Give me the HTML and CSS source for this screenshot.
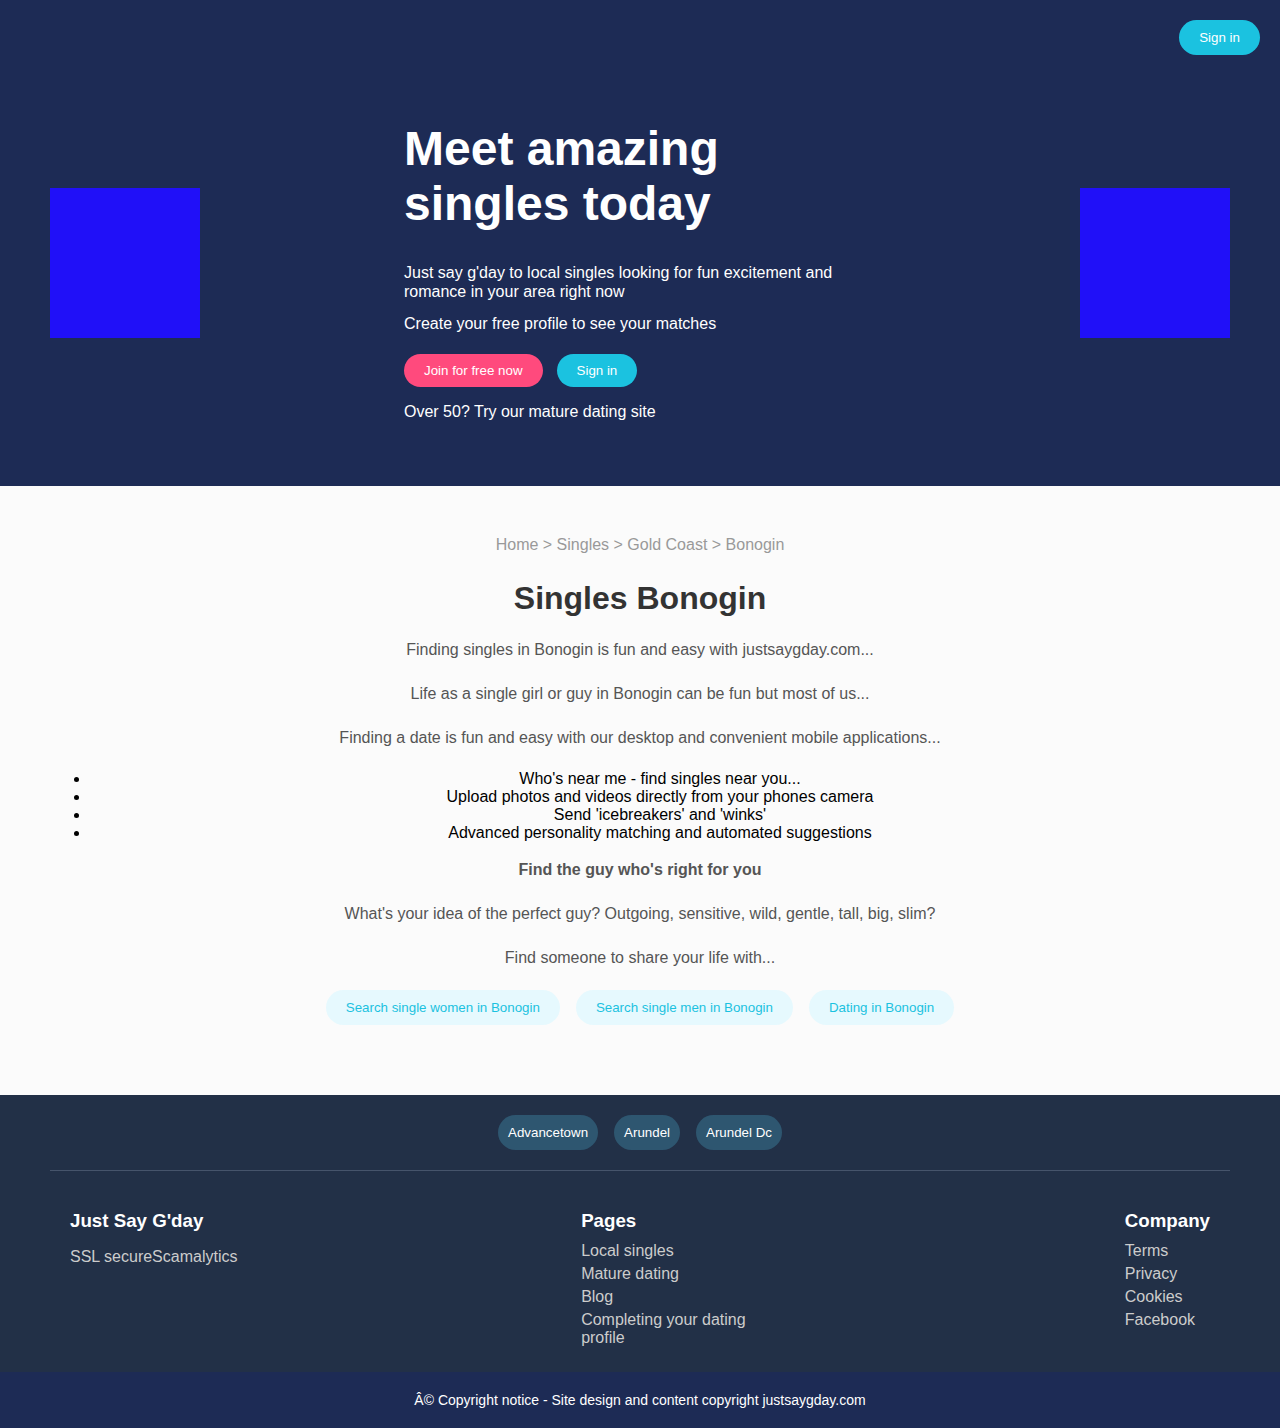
FILE: index.html
```html
<!DOCTYPE html>
<html lang="en">
<head>
<meta charset="utf-8">
<title>Singles Bonogin</title>
<link rel="stylesheet" href="styles.css">
</head>
<body>
<section class="hero">
  <div class="hero-top">
    <a class="btn btn-cyan btn-top" href="#">Sign in</a>
  </div>
  <div class="hero-body">
    <div class="square"></div>
    <div class="hero-content">
      <h1 class="hero-title">Meet amazing singles today</h1>
      <p class="hero-text">Just say g'day to local singles looking for fun excitement and romance in your area right now</p>
      <p class="hero-text">Create your free profile to see your matches</p>
      <div class="hero-actions">
        <a class="btn btn-pink" href="#">Join for free now</a>
        <a class="btn btn-cyan" href="#">Sign in</a>
      </div>
      <p class="hero-text hero-last">Over 50? Try our mature dating site</p>
    </div>
    <div class="square"></div>
  </div>
</section>

<main class="main">
  <div class="breadcrumb">Home &gt; Singles &gt; Gold Coast &gt; Bonogin</div>
  <h1 class="page-title">Singles Bonogin</h1>
  <p class="copy">Finding singles in Bonogin is fun and easy with justsaygday.com...</p>
  <p class="copy">Life as a single girl or guy in Bonogin can be fun but most of us...</p>
  <p class="copy">Finding a date is fun and easy with our desktop and convenient mobile applications...</p>
  <ul class="features">
    <li>Who's near me - find singles near you...</li>
    <li>Upload photos and videos directly from your phones camera</li>
    <li>Send 'icebreakers' and 'winks'</li>
    <li>Advanced personality matching and automated suggestions</li>
  </ul>
  <p class="copy copy-bold">Find the guy who's right for you</p>
  <p class="copy">What's your idea of the perfect guy? Outgoing, sensitive, wild, gentle, tall, big, slim?</p>
  <p class="copy">Find someone to share your life with...</p>
  <div class="search-links">
    <a class="chip" href="#">Search single women in Bonogin</a>
    <a class="chip" href="#">Search single men in Bonogin</a>
    <a class="chip" href="#">Dating in Bonogin</a>
  </div>
</main>

<footer class="footer">
  <div class="towns">
    <a class="town" href="#">Advancetown</a>
    <a class="town" href="#">Arundel</a>
    <a class="town" href="#">Arundel Dc</a>
  </div>
  <div class="footer-cols">
    <div class="fcol">
      <h3 class="fhead">Just Say G'day</h3>
      <div class="ftext">SSL secureScamalytics</div>
    </div>
    <div class="fcol fcol-mid">
      <h3 class="fhead">Pages</h3>
      <ul class="flinks">
        <li><a href="#">Local singles</a></li>
        <li><a href="#">Mature dating</a></li>
        <li><a href="#">Blog</a></li>
        <li><a href="#">Completing your dating profile</a></li>
      </ul>
    </div>
    <div class="fcol">
      <h3 class="fhead">Company</h3>
      <ul class="flinks">
        <li><a href="#">Terms</a></li>
        <li><a href="#">Privacy</a></li>
        <li><a href="#">Cookies</a></li>
        <li><a href="#">Facebook</a></li>
      </ul>
    </div>
  </div>
</footer>
<div class="copyright">Â© Copyright notice - Site design and content copyright justsaygday.com</div>
</body>
</html>
```

FILE: styles.css
```css
* { box-sizing: border-box; }
body {
  margin: 0;
  font-family: "Liberation Sans", Arial, sans-serif;
  background: #fbfbfb;
}
a { text-decoration: none; }

.hero {
  background: #1d2b55;
  color: #fff;
  padding: 20px 20px 65px;
}
.hero-top {
  display: flex;
  justify-content: flex-end;
}
.btn {
  display: inline-block;
  color: #fff;
  font-size: 13.33px;
  line-height: 15px;
  padding: 9px 20px;
  border-radius: 18px;
}
.btn-top { padding: 10px 20px; }
.btn-cyan { background: #1bc2e0; }
.btn-pink { background: #ff4a7d; }

.hero-body {
  display: flex;
  justify-content: space-between;
  align-items: center;
  padding: 0 30px;
  margin-top: 50px;
}
.square {
  width: 150px;
  height: 150px;
  background: #2010f8;
  flex: none;
}
.hero-content {
  width: 472px;
  padding-top: 16px;
}
.hero-title {
  margin: 0 0 33px;
  font-size: 48px;
  line-height: 55.2px;
  font-weight: 700;
}
.hero-text {
  margin: 0 0 14px;
  font-size: 16px;
  line-height: 18.4px;
}
.hero-actions {
  display: flex;
  gap: 14px;
  margin: 20px 0 16px;
}
.hero-last { margin: 0; }

.main {
  padding: 50px 50px 70px;
  text-align: center;
}
.breadcrumb {
  color: #999;
  font-size: 16px;
  line-height: 18.4px;
}
.page-title {
  margin: 26px 0 18.6px;
  font-size: 32px;
  line-height: 36.8px;
  color: #333;
}
.copy {
  margin: 0 0 16px;
  font-size: 16px;
  line-height: 28px;
  color: #555;
}
.copy-bold { font-weight: 700; }
.features {
  margin: 18px 0 14px;
  padding-left: 40px;
  font-size: 16px;
  line-height: 18px;
  color: #000;
}
.search-links {
  display: flex;
  justify-content: center;
  gap: 16px;
  margin-top: 18px;
}
.chip {
  color: #1bc2e0;
  background: #e6f9fe;
  font-size: 13.33px;
  line-height: 15px;
  padding: 10px 20px;
  border-radius: 18px;
}

.footer {
  background: #223047;
  padding: 20px 50px 20px;
}
.towns {
  display: flex;
  justify-content: center;
  gap: 16px;
  padding-bottom: 20px;
  border-bottom: 1px solid #46546b;
}
.town {
  color: #fff;
  background: #2e5670;
  font-size: 13.33px;
  line-height: 15px;
  padding: 10px 10px;
  border-radius: 18px;
}
.footer-cols {
  display: flex;
  justify-content: space-between;
  align-items: flex-start;
  padding: 39px 20px 0;
}
.fcol-mid { width: 200px; }
.fhead {
  margin: 0 0 11px;
  color: #fff;
  font-size: 18.72px;
  line-height: 21.5px;
}
.ftext {
  color: #ccc;
  font-size: 16px;
  line-height: 18px;
  margin-top: 17px;
}
.flinks {
  list-style: none;
  margin: 0;
  padding: 0;
}
.flinks li {
  margin-bottom: 5px;
  font-size: 16px;
  line-height: 18px;
}
.flinks a { color: #ccc; }

.copyright {
  background: #1d2b55;
  color: #fff;
  text-align: center;
  font-size: 14px;
  line-height: 16px;
  padding: 20px;
}
```
